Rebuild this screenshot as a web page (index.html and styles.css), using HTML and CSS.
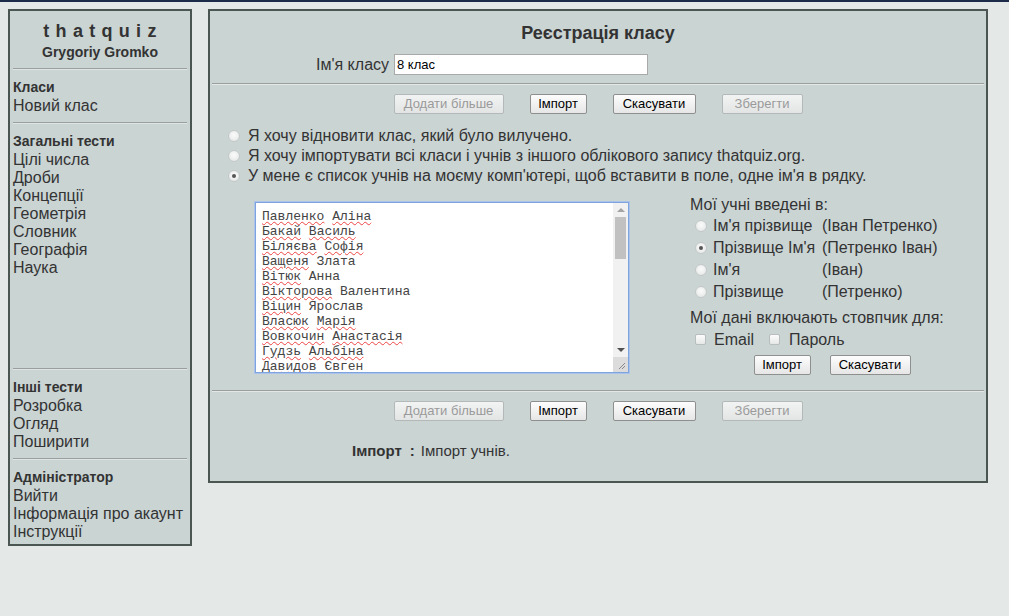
FILE: index.html
```html
<!DOCTYPE html>
<html lang="uk">
<head>
<meta charset="utf-8">
<title>thatquiz</title>
<link rel="stylesheet" href="styles.css">
</head>
<body>
<div class="topline"></div>
<div class="page">
  <aside class="side">
    <div class="brand">thatquiz</div>
    <div class="user">Grygoriy Gromko</div>
    <div class="rule first"></div>
    <div class="head">Класи</div>
    <div class="item">Новий клас</div>
    <div class="rule"></div>
    <div class="head">Загальні тести</div>
    <div class="item">Цілі числа</div>
    <div class="item">Дроби</div>
    <div class="item">Концепції</div>
    <div class="item">Геометрія</div>
    <div class="item">Словник</div>
    <div class="item">Географія</div>
    <div class="item">Наука</div>
    <div class="spacer"></div>
    <div class="rule"></div>
    <div class="head">Інші тести</div>
    <div class="item">Розробка</div>
    <div class="item">Огляд</div>
    <div class="item">Поширити</div>
    <div class="rule"></div>
    <div class="head">Адміністратор</div>
    <div class="item">Вийти</div>
    <div class="item">Інформація про акаунт</div>
    <div class="item">Інструкції</div>
  </aside>

  <main class="panel">
    <h1 class="title">Реєстрація класу</h1>
    <div class="namerow">
      <span class="namelabel">Ім'я класу</span>
      <span class="nameinput">8 клас</span>
    </div>
    <div class="hr"></div>
    <div class="btnrow">
      <span class="btn off w-add">Додати більше</span>
      <span class="btn w-imp">Імпорт</span>
      <span class="btn w-cancel">Скасувати</span>
      <span class="btn off w-save">Зберегти</span>
    </div>
    <div class="options">
      <div class="opt"><span class="radio"></span>Я хочу відновити клас, який було вилучено.</div>
      <div class="opt"><span class="radio"></span>Я хочу імпортувати всі класи і учнів з іншого облікового запису thatquiz.org.</div>
      <div class="opt"><span class="radio on"></span>У мене є список учнів на моєму комп'ютері, щоб вставити в поле, одне ім'я в рядку.</div>
    </div>
    <div class="importarea">
      <div class="ta">
        <div class="tatext">
          <div><u>Павленко</u> <u>Аліна</u></div>
          <div><u>Бакай</u> <u>Василь</u></div>
          <div><u>Біляєва</u> <u>Софія</u></div>
          <div><u>Ващеня</u> Злата</div>
          <div><u>Вітюк</u> Анна</div>
          <div><u>Вікторова</u> Валентина</div>
          <div><u>Віцин</u> Ярослав</div>
          <div><u>Власюк</u> <u>Марія</u></div>
          <div><u>Вовкочин</u> <u>Анастасія</u></div>
          <div><u>Гудзь</u> <u>Альбіна</u></div>
          <div><u>Давидов</u> Євген</div>
        </div>
        <div class="sb">
          <span class="arrow up"></span>
          <span class="thumb"></span>
          <span class="track"></span>
          <span class="arrow down"></span>
          <span class="corner">
            <svg width="8" height="8" viewBox="0 0 8 8"><path d="M7 1 L1 7 M7 4 L4 7" stroke="#888" stroke-width="1" fill="none"/></svg>
          </span>
        </div>
      </div>
      <div class="fmt">
        <div class="fmthead">Мої учні введені в:</div>
        <div class="fmtgrid">
          <span class="fr"><span class="radio"></span>Ім'я прізвище</span><span>(Іван Петренко)</span>
          <span class="fr"><span class="radio on"></span>Прізвище Ім'я</span><span>(Петренко Іван)</span>
          <span class="fr"><span class="radio"></span>Ім'я</span><span>(Іван)</span>
          <span class="fr"><span class="radio"></span>Прізвище</span><span>(Петренко)</span>
        </div>
        <div class="fmthead2">Мої дані включають стовпчик для:</div>
        <div class="checks">
          <span class="chk"><span class="box"></span>Email</span>
          <span class="chk"><span class="box"></span>Пароль</span>
        </div>
        <div class="btnrow small">
          <span class="btn w-imp">Імпорт</span>
          <span class="btn w-cancel2">Скасувати</span>
        </div>
      </div>
    </div>
    <div class="hr lower"></div>
    <div class="btnrow">
      <span class="btn off w-add">Додати більше</span>
      <span class="btn w-imp">Імпорт</span>
      <span class="btn w-cancel">Скасувати</span>
      <span class="btn off w-save">Зберегти</span>
    </div>
    <div class="note"><b>Імпорт</b><b class="colon">:</b>Імпорт учнів.</div>
  </main>
</div>
</body>
</html>
```

FILE: styles.css
```css
html, body {
  margin: 0;
  padding: 0;
  background: #e4e8e6;
  font-family: "Liberation Sans", Arial, sans-serif;
  color: #333;
}
.topline {
  height: 2px;
  background: #1d2b4b;
}
.page {
  display: flex;
  align-items: flex-start;
  gap: 16px;
  padding: 7px 8px;
}
.side {
  width: 174px;
  border: 2px solid #4b5653;
  background: #cad4d3;
  padding: 9px 3px 4px 3px;
  flex: none;
}
.brand {
  text-align: center;
  font-weight: bold;
  font-size: 18px;
  line-height: 22px;
  letter-spacing: 6.3px;
  padding-left: 6px;
}
.user {
  text-align: center;
  font-weight: bold;
  font-size: 14px;
  line-height: 20px;
}
.rule {
  height: 0;
  border-top: 1px solid #9a9f9e;
  border-bottom: 1px solid #dfe5e4;
  margin: 8px 0;
}
.rule.first { margin-top: 6px; }
.head {
  font-weight: bold;
  font-size: 14px;
  line-height: 18px;
}
.item {
  font-size: 16px;
  line-height: 18px;
  padding-top: 1px;
  margin-bottom: -1px;
}
.spacer { height: 84px; }

.panel {
  width: 776px;
  border: 2px solid #4b5653;
  background: #cad4d3;
  padding: 11px 0 20px 0;
  flex: none;
}
.title {
  margin: 0;
  text-align: center;
  font-size: 18px;
  line-height: 22px;
  font-weight: bold;
}
.namerow {
  display: flex;
  align-items: center;
  margin: 10px 0 0 106px;
  height: 21px;
}
.namelabel {
  font-size: 16px;
  margin-right: 5px;
}
.nameinput {
  box-sizing: border-box;
  width: 254px;
  height: 21px;
  background: #fff;
  border: 1px solid #a9a9a9;
  font-size: 13px;
  line-height: 19px;
  padding-left: 2px;
  color: #000;
}
.hr {
  height: 0;
  border-top: 1px solid #9a9f9e;
  border-bottom: 1px solid #e3e8e7;
  margin: 8px 2px 0 2px;
}
.hr.lower { margin-top: 15px; }
.btnrow {
  display: flex;
  justify-content: center;
  gap: 26px;
  margin-top: 9px;
}
.btn {
  box-sizing: border-box;
  height: 20px;
  padding: 0;
  text-align: center;
  font-size: 13px;
  line-height: 18px;
  color: #000;
  border: 1px solid #8f8f8f;
  border-radius: 2px;
  background: linear-gradient(#fdfdfd, #e6e6e6);
}
.btn.off {
  color: #9a9a9a;
  border-color: #b4b8b8;
  background: linear-gradient(#f2f3f3, #e3e5e5);
}
.w-add { width: 110px; }
.w-imp { width: 57px; }
.w-cancel { width: 83px; }
.w-cancel2 { width: 81px; }
.w-save { width: 81px; }
.options {
  margin: 12px 0 0 18px;
}
.opt {
  display: flex;
  align-items: center;
  font-size: 16px;
  line-height: 20px;
}
.radio {
  box-sizing: border-box;
  width: 12px;
  height: 12px;
  border-radius: 50%;
  border: 1px solid #c4c8c8;
  background: radial-gradient(circle at 50% 40%, #fbfbfb, #e1e3e3);
  margin-right: 8px;
  flex: none;
  display: inline-flex;
  align-items: center;
  justify-content: center;
}
.radio.on::after {
  content: "";
  width: 4px;
  height: 4px;
  border-radius: 50%;
  background: #555;
}
.importarea {
  display: flex;
  align-items: flex-start;
  margin: 16px 0 0 45px;
  gap: 61px;
}
.ta {
  box-sizing: border-box;
  width: 374px;
  height: 171px;
  border: 1px solid #7fa3dc;
  box-shadow: 0 0 0 1px #a9c3ea;
  background: #fff;
  display: flex;
  overflow: hidden;
}
.tatext {
  flex: 1;
  padding: 6px 0 0 6px;
  font-family: "Liberation Mono", "Courier New", monospace;
  font-size: 13px;
  line-height: 15px;
  color: #444;
  white-space: nowrap;
}
.tatext u {
  text-decoration: underline wavy #e44;
  text-decoration-thickness: 1px;
  text-underline-offset: 1px;
}
.sb {
  width: 15px;
  background: #f1f1f1;
  display: flex;
  flex-direction: column;
  align-items: center;
}
.arrow {
  width: 0;
  height: 0;
  border-left: 4px solid transparent;
  border-right: 4px solid transparent;
  margin: 5px 0;
}
.arrow.up { border-bottom: 4px solid #a3a3a3; }
.arrow.down { border-top: 4px solid #505050; }
.thumb {
  width: 11px;
  height: 42px;
  background: #c1c1c1;
}
.track { flex: 1; }
.corner {
  width: 15px;
  height: 15px;
  background: #dcdcdc;
  display: flex;
  align-items: flex-end;
  justify-content: flex-end;
  padding: 0 2px 2px 0;
  box-sizing: border-box;
}
.fmt {
  width: 284px;
  font-size: 16px;
}
.fmthead {
  line-height: 21px;
  margin-top: -8px;
}
.fmtgrid {
  display: grid;
  grid-template-columns: 127px auto;
  padding-left: 5px;
}
.fmtgrid > span {
  line-height: 22px;
  height: 22px;
}
.fr {
  display: flex;
  align-items: center;
}
.fr .radio { margin-right: 6px; }
.fmthead2 {
  line-height: 22px;
  margin-top: 4px;
}
.checks {
  display: flex;
  padding-left: 5px;
  gap: 15px;
  line-height: 21px;
}
.chk {
  display: flex;
  align-items: center;
}
.box {
  box-sizing: border-box;
  width: 11px;
  height: 11px;
  border: 1px solid #b9bdbd;
  border-radius: 2px;
  background: linear-gradient(#fcfcfc, #e6e8e8);
  margin-right: 8px;
}
.chk + .chk .box { margin-right: 9px; }
.btnrow.small {
  gap: 19px;
  margin-top: 5px;
}
.note {
  margin: 20px 0 0 142px;
  font-size: 15px;
  line-height: 20px;
}
.note .colon {
  margin: 0 6px 0 8px;
}
```
